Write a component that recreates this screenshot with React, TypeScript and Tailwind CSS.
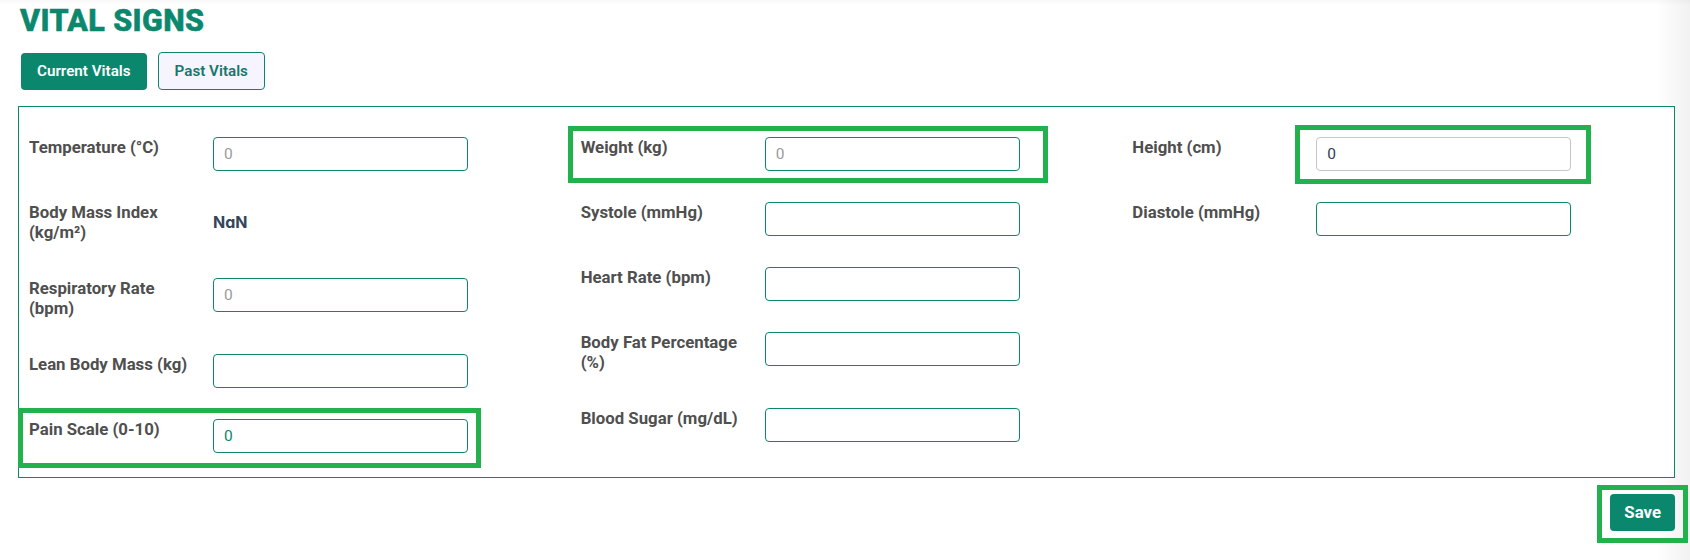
import React from "react"

type Field = {
  label: string
  placeholder?: string
  value?: string
  nan?: boolean
  inputClass?: string
  mark?: string
}

const teal = "border-[#0b876e]"

const columns: Field[][] = [
  [
    { label: "Temperature (°C)", placeholder: "0" },
    { label: "Body Mass Index (kg/m²)", nan: true },
    { label: "Respiratory Rate (bpm)", placeholder: "0" },
    { label: "Lean Body Mass (kg)" },
    {
      label: "Pain Scale (0-10)",
      value: "0",
      inputClass: "text-[#0b876e]",
      mark: "left-[-11px] top-[-11px] w-[463px] h-[60px]",
    },
  ],
  [
    {
      label: "Weight (kg)",
      placeholder: "0",
      mark: "left-[-13px] top-[-11px] w-[480px] h-[57px]",
    },
    { label: "Systole (mmHg)" },
    { label: "Heart Rate (bpm)" },
    { label: "Body Fat Percentage (%)" },
    { label: "Blood Sugar (mg/dL)" },
  ],
  [
    {
      label: "Height (cm)",
      value: "0",
      inputClass: "!border-[#c6c6c6] text-[#2f3e4e]",
      mark: "left-[163px] top-[-12px] w-[296px] h-[59px]",
    },
    { label: "Diastole (mmHg)" },
  ],
]

function VitalField({ field }: { field: Field }) {
  return (
    <div className="relative flex items-start">
      <label className="w-[164px] shrink-0 pb-[5px] text-[16.8px] font-bold leading-[20px] text-[#4f4f4f]">
        {field.label}
      </label>
      <div className="ml-[20px]">
        {field.nan ? (
          <div className="pt-[8px] font-[Inter,sans-serif] text-[16px] font-bold leading-[24px] text-[#33475b] [font-feature-settings:'cv11']">
            NaN
          </div>
        ) : (
          <input
            readOnly
            placeholder={field.placeholder}
            defaultValue={field.value}
            className={`block h-[34px] w-[255px] rounded-[4px] border ${teal} bg-white px-[10px] font-[Roboto,sans-serif] text-[15.5px] outline-none placeholder:text-[#9b9b9b] ${field.inputClass ?? ""}`}
          />
        )}
      </div>
      {field.mark && (
        <div className={`pointer-events-none absolute border-[5px] border-[#22b14c] ${field.mark}`} />
      )}
    </div>
  )
}

export default function App() {
  return (
    <div className="min-h-[560px] bg-linear-to-r from-white from-[98%] to-[#f1f1f1] pl-[18px] pr-[15px] pt-[3px] font-[Roboto,sans-serif] shadow-[inset_0_5px_4px_-3px_rgba(0,0,0,0.035)]">
      <h1 className="pl-[2px] text-[30.5px] font-extrabold leading-[36px] tracking-[0.4px] text-[#0b876e] [-webkit-text-stroke:0.6px_#0b876e]">
        VITAL SIGNS
      </h1>

      {/* tabs */}
      <div className="mt-[13px] flex items-center gap-[11px] pl-[3px]">
        <button className="h-[37px] rounded-[4px] bg-[#0b876e] px-4 text-[15.2px] font-semibold text-white">
          Current Vitals
        </button>
        <button className="h-[38px] rounded-[4px] border border-[#0b876e] bg-[#f6f4ff] px-4 text-[15.2px] font-semibold text-[#16796b]">
          Past Vitals
        </button>
      </div>

      {/* vitals panel */}
      <div className="mt-[16px] grid grid-cols-3 items-start gap-x-5 border border-[#0b876e] bg-white px-[10px] pb-[24px] pt-[30px]">
        {columns.map((col, i) => (
          <div key={i} className="flex flex-col gap-[31px]">
            {col.map((f) => (
              <VitalField key={f.label} field={f} />
            ))}
          </div>
        ))}
      </div>

      <div className="mt-[16px] flex justify-end">
        <div className="relative">
          <button className="h-[37px] rounded-[4px] bg-[#0b876e] px-[14px] text-[16.8px] font-bold text-white">
            Save
          </button>
          <div className="pointer-events-none absolute left-[-13px] top-[-9px] h-[58px] w-[91px] border-[5px] border-[#22b14c]" />
        </div>
      </div>
    </div>
  )
}
